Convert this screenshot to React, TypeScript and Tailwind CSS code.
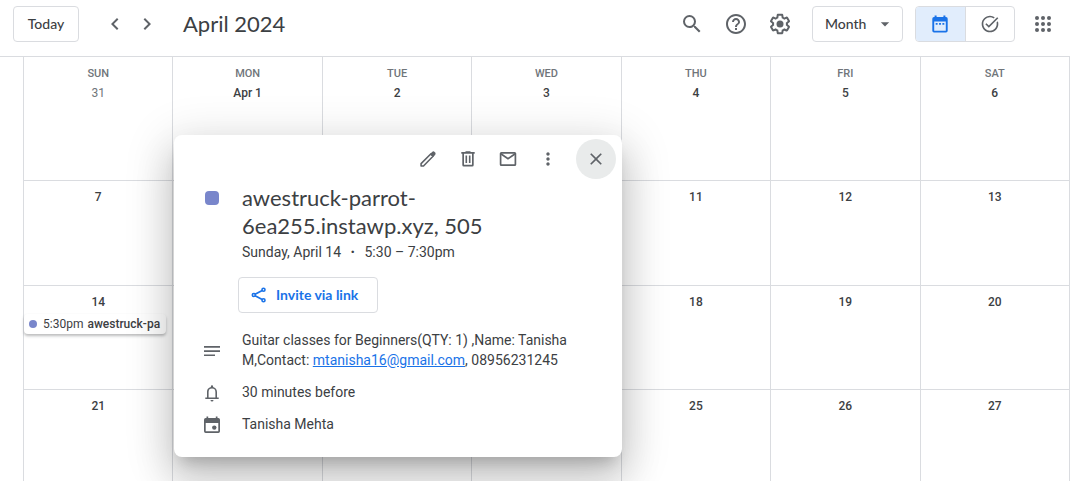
import type { ReactNode } from "react";
import {
  MdArrowDropDown,
  MdChevronLeft,
  MdChevronRight,
  MdClose,
  MdHelpOutline,
  MdMoreVert,
  MdOutlineTaskAlt,
  MdSearch,
} from "react-icons/md";

const weekdays = ["SUN", "MON", "TUE", "WED", "THU", "FRI", "SAT"];

const weeks = [
  ["31", "Apr 1", "2", "3", "4", "5", "6"],
  ["7", "8", "9", "10", "11", "12", "13"],
  ["14", "15", "16", "17", "18", "19", "20"],
  ["21", "22", "23", "24", "25", "26", "27"],
];

const rowHeights = ["h-[98px]", "h-[105px]", "h-[104px]", "h-[105px]"];

const display = "font-['Lato','Open_Sans',sans-serif]";

function SettingsIcon() {
  return (
    <svg viewBox="0 0 24 24" className="size-6" fill="currentColor" aria-hidden="true">
      <path d="M13.85 22.25h-3.7c-.74 0-1.36-.54-1.45-1.27l-.27-1.89c-.27-.14-.53-.29-.79-.46l-1.8.72c-.7.26-1.47-.03-1.81-.65L2.2 15.53c-.35-.66-.2-1.44.36-1.88l1.53-1.19c-.01-.15-.02-.3-.02-.46 0-.15.01-.31.02-.46l-1.52-1.19c-.59-.45-.74-1.26-.37-1.88l1.85-3.19c.34-.62 1.11-.9 1.79-.63l1.81.73c.26-.17.52-.32.78-.46l.27-1.91c.09-.7.71-1.25 1.44-1.25h3.7c.74 0 1.36.54 1.45 1.27l.27 1.89c.27.14.53.29.79.46l1.8-.72c.71-.26 1.48.03 1.82.65l1.84 3.18c.36.66.2 1.44-.36 1.88l-1.52 1.19c.01.15.02.3.02.46s-.01.31-.02.46l1.52 1.19c.56.45.72 1.23.37 1.86l-1.86 3.22c-.34.62-1.11.9-1.8.63l-1.8-.72c-.26.17-.52.32-.78.46l-.27 1.91c-.1.68-.72 1.22-1.46 1.22zm-3.23-2h2.76l.37-2.55.53-.22c.44-.18.88-.44 1.34-.78l.45-.34 2.38.96 1.38-2.4-2.03-1.58.07-.56c.03-.26.06-.51.06-.78s-.03-.53-.06-.78l-.07-.56 2.03-1.58-1.39-2.4-2.39.96-.45-.35c-.42-.32-.87-.58-1.33-.77l-.52-.22-.37-2.55h-2.76l-.37 2.55-.53.21c-.44.19-.88.44-1.34.79l-.45.33-2.38-.95-1.39 2.39 2.03 1.58-.07.56a7 7 0 0 0-.06.79c0 .26.02.53.06.78l.07.56-2.03 1.58 1.38 2.4 2.39-.96.45.35c.43.33.86.58 1.33.77l.53.22.38 2.55z" />
      <circle cx="12" cy="12" r="3.5" />
    </svg>
  );
}

function AppsIcon() {
  const stops = [6, 12, 18];
  return (
    <svg viewBox="0 0 24 24" className="size-6" fill="currentColor" aria-hidden="true">
      {stops.map((y) => stops.map((x) => <circle key={`${x}-${y}`} cx={x} cy={y} r="2" />))}
    </svg>
  );
}

function CalendarIcon() {
  return (
    <svg viewBox="0 0 20 20" className="size-5" fill="currentColor" aria-hidden="true">
      <path
        fillRule="evenodd"
        d="M4.600 1.500h2V3h6.800V1.500h2V3h.600A1.700 1.700 0 0 1 17.700 4.700V16.800A1.700 1.700 0 0 1 16 18.500H4A1.700 1.700 0 0 1 2.300 16.800V4.700A1.700 1.700 0 0 1 4 3h.600zM4.200 7.500v9.200h11.600V7.500z"
      />
      <path d="M5.700 9h1.900v1.700H5.700zM9.050 9h1.900v1.700h-1.900zM12.400 9h1.900v1.700h-1.900z" />
    </svg>
  );
}

function PencilIcon() {
  return (
    <svg viewBox="0 0 20 20" className="size-5" fill="currentColor" aria-hidden="true">
      <path
        d="M3.100 17v-2.400L12.700 5 15 7.300 5.500 17z"
        fill="none"
        stroke="currentColor"
        strokeWidth="1.600"
        strokeLinejoin="round"
      />
      <path d="M12 5l2.100-2.100a1.800 1.800 0 0 1 2.500 0l.500.500a1.800 1.800 0 0 1 0 2.500L15 8z" />
    </svg>
  );
}

function TrashIcon() {
  return (
    <svg viewBox="0 0 20 20" className="size-5" fill="currentColor" aria-hidden="true">
      <path
        fillRule="evenodd"
        d="M12.500 3V2.200h-5V3H3.300v1.700h1V16A1.500 1.500 0 0 0 5.800 17.500h8.400a1.500 1.500 0 0 0 1.500-1.500V4.700h1V3zM14 15.800H6V4.700h8z"
      />
      <path d="M7.500 6.500h1.600V14H7.500zM10.900 6.500h1.600V14h-1.600z" />
    </svg>
  );
}

function MailIcon() {
  return (
    <svg viewBox="0 0 20 20" className="size-5" fill="none" stroke="currentColor" strokeWidth="1.700" aria-hidden="true">
      <rect x="2.600" y="3.800" width="14.800" height="12.400" rx="0.800" />
      <path d="M2.800 4.800 10 9.700l7.200-4.900" />
    </svg>
  );
}

function ShareIcon() {
  return (
    <svg viewBox="0 0 18 18" className="size-[18px]" fill="none" stroke="currentColor" strokeWidth="1.600" aria-hidden="true">
      <circle cx="13.500" cy="3.800" r="1.500" />
      <circle cx="3.800" cy="9" r="1.500" />
      <circle cx="13.500" cy="14.200" r="1.500" />
      <path d="m5.100 8.300 7.100-3.800M5.100 9.700l7.100 3.800" />
    </svg>
  );
}

function NotesIcon() {
  return (
    <svg viewBox="0 0 20 20" className="size-5" fill="currentColor" aria-hidden="true">
      <path d="M2 5h16v1.700H2zM2 9.200h16v1.700H2zM2 13.400h11v1.700H2z" />
    </svg>
  );
}

function BellIcon() {
  return (
    <svg viewBox="0 0 20 20" className="size-5" fill="currentColor" aria-hidden="true">
      <path
        fillRule="evenodd"
        d="M15 14.500V9c0-2.400-1.600-4.400-3.900-4.900V3.300a1.100 1.100 0 0 0-2.200 0v.8A5 5 0 0 0 5 9v5.500H3.300V16h13.400v-1.500zm-1.600 0H6.600V9a3.400 3.400 0 0 1 6.800 0z"
      />
      <path d="M8.500 17h3a1.500 1.500 0 0 1-3 0z" />
    </svg>
  );
}

function EventIcon() {
  return (
    <svg viewBox="0 0 20 20" className="size-5" fill="currentColor" aria-hidden="true">
      <path
        fillRule="evenodd"
        d="M4.500 1.500h1.700V3h7.600V1.500h1.700V3h.8A1.700 1.700 0 0 1 18 4.700v11.600a1.700 1.700 0 0 1-1.700 1.700H3.700A1.700 1.700 0 0 1 2 16.300V4.700A1.700 1.700 0 0 1 3.700 3h.8zM3.700 8v8.300h12.600V8z"
      />
      <circle cx="12.300" cy="12.600" r="2.200" />
    </svg>
  );
}

function IconButton({ label, className = "size-10", children }: { label: string; className?: string; children: ReactNode }) {
  return (
    <button type="button" aria-label={label} className={`flex shrink-0 items-center justify-center rounded-full ${className}`}>
      {children}
    </button>
  );
}

function TopBar() {
  return (
    <header className="flex h-14 shrink-0 items-start pt-[6px] pr-[7px] pl-[13px] text-[#5f6368]">
      <button type="button" className={`h-9 w-[66px] rounded border border-[#dadce0] text-sm font-medium text-[#3c4043] ${display}`}>
        Today
      </button>
      <div className="ml-5 flex h-9 items-center">
        <IconButton label="Previous month" className="size-8">
          <MdChevronLeft size={24} />
        </IconButton>
        <IconButton label="Next month" className="size-8">
          <MdChevronRight size={24} />
        </IconButton>
      </div>
      <h1 className={`ml-5 text-[22px] leading-9 text-[#3c4043] ${display}`}>April 2024</h1>
      <div className="ml-auto flex h-9 items-center">
        <div className="flex items-center gap-1">
          <IconButton label="Search">
            <MdSearch size={24} />
          </IconButton>
          <IconButton label="Support">
            <MdHelpOutline size={24} />
          </IconButton>
          <IconButton label="Settings">
            <SettingsIcon />
          </IconButton>
        </div>
        <div className="relative ml-3">
          <select
            aria-label="View"
            defaultValue="Month"
            className={`h-9 w-[91px] appearance-none rounded border border-[#dadce0] bg-white pl-3 text-sm font-medium text-[#3c4043] ${display}`}
          >
            <option>Month</option>
          </select>
          <MdArrowDropDown size={20} className="pointer-events-none absolute top-2 right-2" />
        </div>
        <div className="ml-3 flex h-9 w-[100px] overflow-hidden rounded border border-[#dadce0]">
          <button
            type="button"
            aria-label="Calendar"
            aria-pressed="true"
            className="flex flex-1 items-center justify-center border-r border-[#dadce0] bg-[#e1edfc] text-[#1a73e8]"
          >
            <CalendarIcon />
          </button>
          <button type="button" aria-label="Tasks" className="flex flex-1 items-center justify-center">
            <MdOutlineTaskAlt size={20} />
          </button>
        </div>
        <IconButton label="Google apps" className="ml-2 size-10">
          <AppsIcon />
        </IconButton>
      </div>
    </header>
  );
}

function EventChip() {
  return (
    <button
      type="button"
      className="mt-1 flex h-5 w-[142px] items-center overflow-hidden rounded bg-white pl-[5px] text-xs font-normal whitespace-nowrap text-[#3c4043] shadow-[0_2px_3px_0_rgba(60,64,67,0.35)]"
    >
      <span className="mr-[6px] size-2 shrink-0 rounded-full bg-[#7986cb]" />
      <span className="mr-1">5:30pm</span>
      <span className="font-medium">awestruck-pa</span>
    </button>
  );
}

function MonthGrid() {
  return (
    <div className="border-t border-[#dadce0] pl-[23px]">
      <table className="w-full table-fixed border-separate border-spacing-0 border-r border-[#dadce0]">
        <thead>
          <tr>
            {weekdays.map((day) => (
              <th key={day} scope="col" className="border-l border-[#dadce0] p-0 pt-[9px] text-[11px] leading-4 font-medium text-[#70757a]">
                {day}
              </th>
            ))}
          </tr>
        </thead>
        <tbody>
          {weeks.map((week, row) => (
            <tr key={week[0]} className={rowHeights[row]}>
              {week.map((date) => (
                <td
                  key={date}
                  className={`border-l border-[#dadce0] p-0 text-center align-top text-xs leading-4 ${row === 0 ? "pt-[3px]" : "border-t pt-2"} ${
                    date === "31" ? "text-[#70757a]" : "font-medium text-[#3c4043]"
                  }`}
                >
                  {date}
                  {date === "14" && <EventChip />}
                </td>
              ))}
            </tr>
          ))}
        </tbody>
      </table>
    </div>
  );
}

function DetailRow({ icon, children }: { icon: ReactNode; children: ReactNode }) {
  return (
    <div className="flex items-center">
      <span className="mr-5 -mb-[2px] flex w-5 shrink-0 justify-center text-[#5f6368]">{icon}</span>
      <div>{children}</div>
    </div>
  );
}

function EventDialog() {
  return (
    <section
      role="dialog"
      aria-label="Event details"
      className="absolute top-[135px] left-[174px] w-[448px] rounded-lg bg-white pb-[23px] text-sm leading-5 text-[#3c4043] shadow-[0_24px_38px_3px_rgba(0,0,0,0.14),0_9px_46px_8px_rgba(0,0,0,0.12),0_11px_15px_-7px_rgba(0,0,0,0.2)]"
    >
      <div className="flex justify-end pt-1 pr-[6px] text-[#5f6368]">
        <IconButton label="Edit event">
          <PencilIcon />
        </IconButton>
        <IconButton label="Delete event">
          <TrashIcon />
        </IconButton>
        <IconButton label="Email event details">
          <MailIcon />
        </IconButton>
        <IconButton label="Options">
          <MdMoreVert size={20} />
        </IconButton>
        <IconButton label="Close" className="ml-2 size-10 bg-[#e9ebeb]">
          <MdClose size={20} />
        </IconButton>
      </div>
      <div className="flex flex-col gap-3 pt-[5px] pr-8 pl-7">
        <div className="flex">
          <span className="mt-[7px] mr-[23px] ml-[3px] size-[14px] shrink-0 rounded bg-[#7986cb]" />
          <div>
            <h2 className={`text-[22px] leading-7 ${display}`}>
              awestruck-parrot-
              <br />
              6ea255.instawp.xyz, 505
            </h2>
            <p className="pt-[2px]">
              Sunday, April 14 <span className="mx-[6px] font-black">·</span> 5:30 – 7:30pm
            </p>
          </div>
        </div>
        <button
          type="button"
          className={`mt-[3px] mb-[5px] ml-9 flex h-9 w-[140px] items-center gap-2 rounded border border-[#dadce0] pl-[11px] font-bold text-[#1a73e8] ${display}`}
        >
          <ShareIcon />
          Invite via link
        </button>
        <DetailRow icon={<NotesIcon />}>
          Guitar classes for Beginners(QTY: 1) ,Name: Tanisha
          <br />
          M,Contact:{" "}
          <a href="mailto:mtanisha16@gmail.com" className="text-[#1a73e8] underline">
            mtanisha16@gmail.com
          </a>
          , 08956231245
        </DetailRow>
        <DetailRow icon={<BellIcon />}>30 minutes before</DetailRow>
        <DetailRow icon={<EventIcon />}>Tanisha Mehta</DetailRow>
      </div>
    </section>
  );
}

export default function App() {
  return (
    <main className="relative flex h-screen flex-col overflow-hidden bg-white font-['Roboto','Liberation_Sans',sans-serif]">
      <TopBar />
      <MonthGrid />
      <EventDialog />
    </main>
  );
}
